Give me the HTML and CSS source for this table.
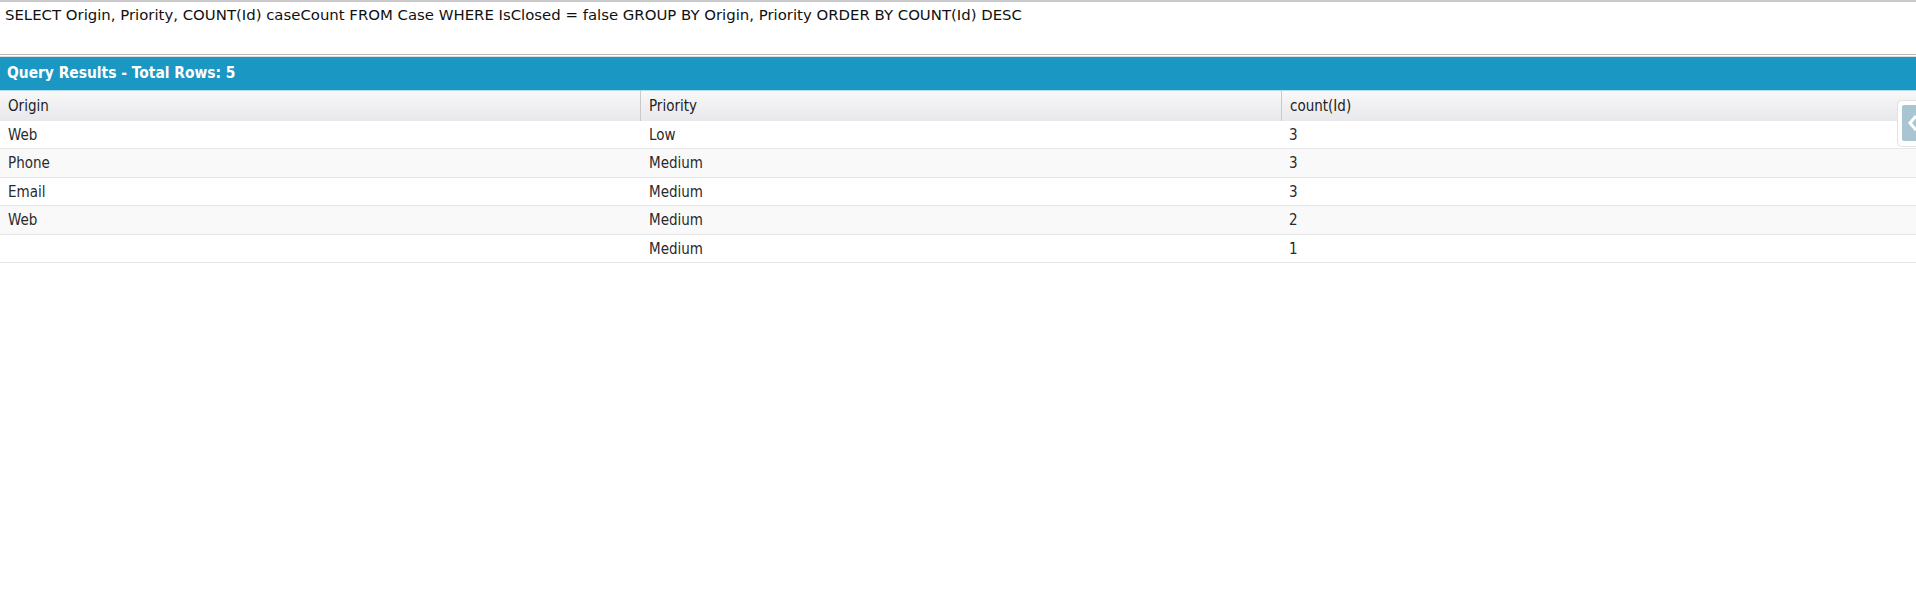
FILE: index.html
```html
<!DOCTYPE html>
<html>
<head>
<meta charset="utf-8">
<link rel="stylesheet" href="styles.css">
</head>
<body>
<div class="query">SELECT Origin, Priority, COUNT(Id) caseCount FROM Case WHERE IsClosed = false GROUP BY Origin, Priority ORDER BY COUNT(Id) DESC</div>
<div class="divider"></div>
<div class="results-bar">Query Results - Total Rows: 5</div>
<div class="grid">
  <div class="hcell first">Origin</div>
  <div class="hcell">Priority</div>
  <div class="hcell">count(Id)</div>

  <div class="cell">Web</div><div class="cell">Low</div><div class="cell">3</div>
  <div class="cell alt">Phone</div><div class="cell alt">Medium</div><div class="cell alt">3</div>
  <div class="cell">Email</div><div class="cell">Medium</div><div class="cell">3</div>
  <div class="cell alt">Web</div><div class="cell alt">Medium</div><div class="cell alt">2</div>
  <div class="cell"></div><div class="cell">Medium</div><div class="cell">1</div>
</div>
<div class="side-tab"><div class="side-btn"><svg width="14" height="36" viewBox="0 0 14 36"><path d="M14 11 L8 18 L14 25" fill="none" stroke="#ffffff" stroke-width="3"/></svg></div></div>
</body>
</html>
```

FILE: styles.css
```css
html, body {
  margin: 0;
  padding: 0;
  background: #ffffff;
  overflow: hidden;
}
body {
  font-family: "DejaVu Sans Condensed", "DejaVu Sans", sans-serif;
  font-size: 15px;
  color: #222222;
  position: relative;
  height: 591px;
}
.query {
  height: 54px;
  padding: 4px 0 0 5px;
  box-sizing: border-box;
  border-top: 2px solid #c9c9cc;
  color: #111111;
  font-family: "DejaVu Sans", sans-serif;
  font-size: 14.9px;
  line-height: 18px;
}
.divider {
  height: 1px;
  border-top: 1px solid #b9b9bc;
  border-bottom: 1px solid #dedee0;
  background: #ffffff;
}
.results-bar {
  height: 33px;
  background: #1a97c3;
  color: #ffffff;
  font-weight: bold;
  font-size: 15.4px;
  line-height: 32px;
  padding-left: 7px;
  box-sizing: border-box;
}
.grid {
  display: grid;
  grid-template-columns: 640px 641px 1fr;
}
.hcell {
  height: 31px;
  box-sizing: border-box;
  padding-left: 8px;
  line-height: 30px;
  border-top: 1px solid #b6dcea;
  border-left: 1px solid #c9c9cc;
  background: linear-gradient(#f8f8f9, #e8e8ea);
  color: #222222;
}
.hcell.first {
  border-left: none;
}
.cell {
  height: 28.4px;
  box-sizing: border-box;
  padding: 1px 0 0 8px;
  line-height: 27px;
  border-bottom: 1px solid #e6e6e6;
  background: #ffffff;
  color: #2a2a2a;
}
.cell:nth-child(3n+2) {
  padding-left: 9px;
}
.cell.alt {
  background: #f9f9f9;
}
.side-tab {
  position: absolute;
  top: 100px;
  right: 0;
  width: 19px;
  height: 47px;
  box-sizing: border-box;
  background: #ffffff;
  border: 1px solid #e2e2e2;
  border-right: none;
  border-radius: 5px 0 0 5px;
  padding: 4px 0 0 4px;
}
.side-btn {
  width: 14px;
  height: 36px;
  background: #a9c5d2;
  border-radius: 2px 0 0 2px;
}
.side-btn svg {
  display: block;
}
```
